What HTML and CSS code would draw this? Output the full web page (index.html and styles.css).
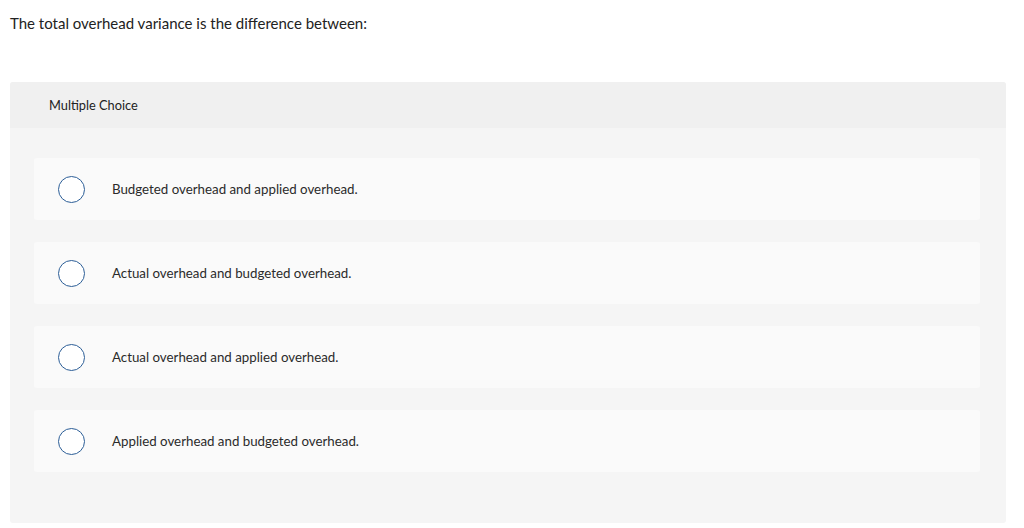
FILE: index.html
```html
<!DOCTYPE html>
<html>
<head>
<meta charset="utf-8">
<link rel="stylesheet" href="styles.css">
</head>
<body>
<p class="question">The total overhead variance is the difference between:</p>
<section class="panel">
  <div class="panel-head">Multiple Choice</div>
  <div class="panel-body">
    <div class="option"><span class="radio"></span><span class="label">Budgeted overhead and applied overhead.</span></div>
    <div class="option"><span class="radio"></span><span class="label">Actual overhead and budgeted overhead.</span></div>
    <div class="option"><span class="radio"></span><span class="label">Actual overhead and applied overhead.</span></div>
    <div class="option"><span class="radio"></span><span class="label">Applied overhead and budgeted overhead.</span></div>
  </div>
</section>
</body>
</html>
```
FILE: styles.css
```css
html, body {
  margin: 0;
  padding: 0;
  background: #ffffff;
}
body {
  font-family: Lato, "Liberation Sans", sans-serif;
  color: #222222;
  width: 1024px;
}
.question {
  margin: 0;
  padding: 14px 0 0 10px;
  height: 82px;
  box-sizing: border-box;
  font-size: 15px;
  line-height: 18px;
  color: #222;
}
.panel {
  margin-left: 10px;
  width: 996px;
  background: #f5f5f5;
  border-radius: 3px;
  overflow: hidden;
}
.panel-head {
  height: 46px;
  background: #f0f0f0;
  padding-left: 39px;
  display: flex;
  align-items: center;
  font-size: 12.8px;
  color: #222;
}
.panel-body {
  padding: 30px 26px 51px 24px;
  display: flex;
  flex-direction: column;
  gap: 22px;
}
.option {
  height: 62px;
  background: #fafafa;
  border-radius: 3px;
  display: flex;
  align-items: center;
  padding-left: 24px;
}
.radio {
  width: 27px;
  height: 27px;
  box-sizing: border-box;
  border: 1.5px solid #2c5e97;
  border-radius: 50%;
  background: #fff;
  flex: none;
}
.label {
  margin-left: 27px;
  font-size: 13.3px;
  color: #2b2b2b;
}
```
